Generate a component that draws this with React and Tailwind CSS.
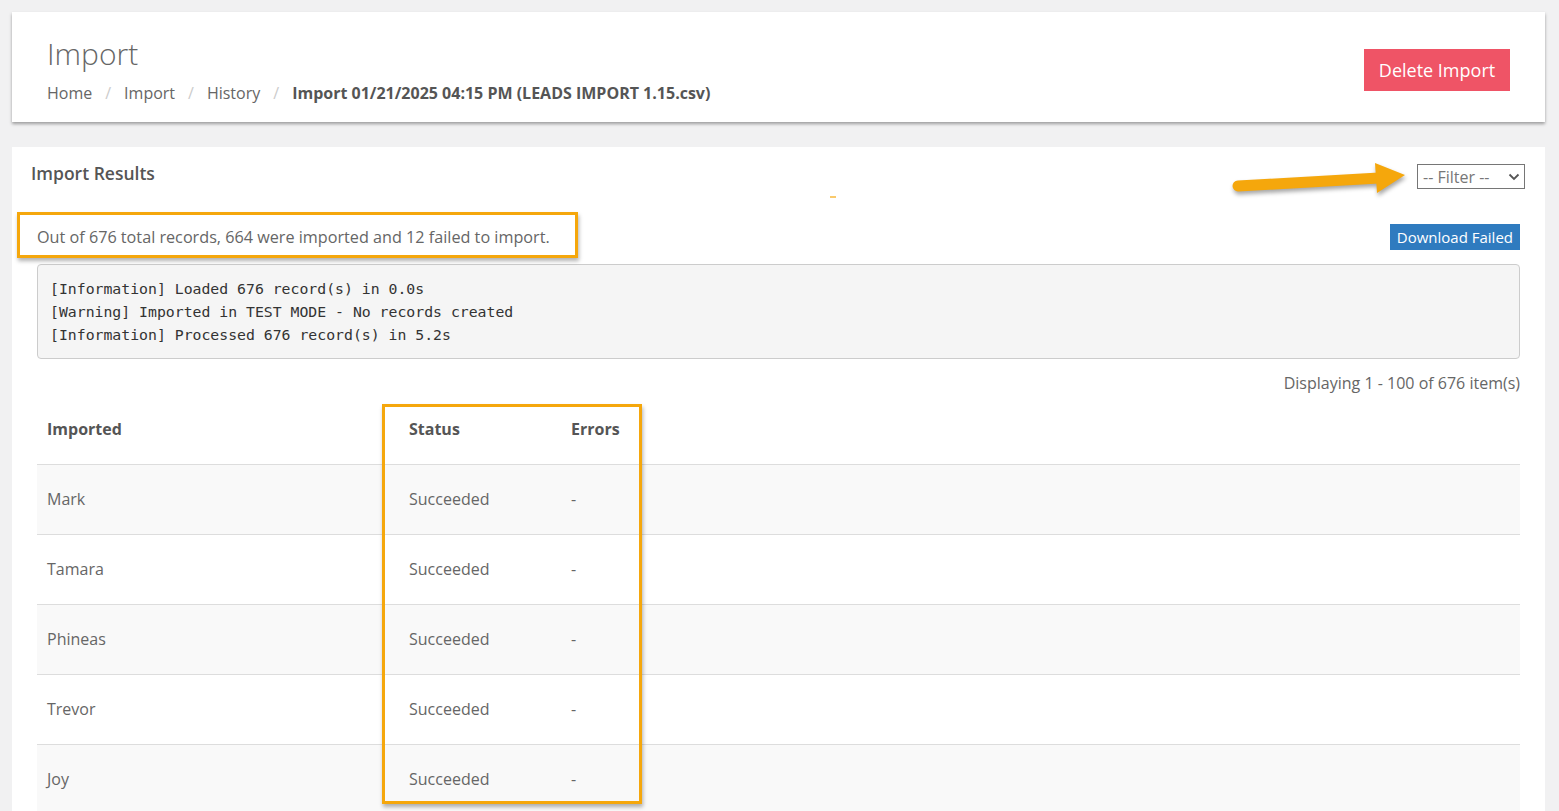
import React from "react";

const rows = ["Mark", "Tamara", "Phineas", "Trevor", "Joy"];

function Arrow() {
  return (
    <svg
      className="absolute left-[1205px] top-[10px]"
      width="200"
      height="50"
      viewBox="0 0 200 50"
      style={{ filter: "drop-shadow(1px 3px 2px rgba(0,0,0,0.35))" }}
    >
      <line x1="21" y1="29" x2="162" y2="21" stroke="#f5a70c" strokeWidth="11" strokeLinecap="round" />
      <polygon points="158,6 188,18 160,36" fill="#f5a70c" />
    </svg>
  );
}

export default function App() {
  return (
    <div
      className="min-h-screen bg-[#f1f1f2] pl-3 pr-[14px] pt-3 text-[#666666]"
      style={{ fontFamily: "'Open Sans', 'Liberation Sans', sans-serif" }}
    >
      {/* Header card */}
      <div className="flex h-[110px] items-start justify-between bg-white px-[35px] shadow-[0_2px_3px_rgba(0,0,0,0.35)]">
        <div className="pt-[24px]">
          <h1 className="text-[30px] font-light leading-[36px] text-[#666666]">Import</h1>
          <nav className="mt-[10px] flex items-center text-[16px] leading-[22px]">
            <span>Home</span>
            <span className="px-[13px] text-[#cccccc]">/</span>
            <span>Import</span>
            <span className="px-[13px] text-[#cccccc]">/</span>
            <span>History</span>
            <span className="px-[13px] text-[#cccccc]">/</span>
            <span className="font-bold text-[#555555]">Import 01/21/2025 04:15 PM (LEADS IMPORT 1.15.csv)</span>
          </nav>
        </div>
        <button className="mt-[37px] h-[42px] w-[146px] bg-[#ef5466] text-[18px] text-white">
          Delete Import
        </button>
      </div>

      {/* Results card */}
      <div className="relative mt-[25px] bg-white pb-[20px]">
        <Arrow />
        <div className="absolute left-[818px] top-[49px] h-[2px] w-[6px] bg-[#f5a70c] opacity-60" />
        <div className="absolute left-[5px] top-[65px] h-[46px] w-[561px] border-[3px] border-[#f5a70c] shadow-[1px_3px_4px_rgba(0,0,0,0.3)]" />
        <div className="absolute left-[370px] top-[257px] h-[400px] w-[260px] border-[3px] border-[#f5a70c] shadow-[1px_3px_4px_rgba(0,0,0,0.3)]" />

        <div className="flex items-start justify-between pl-[19px] pr-[20px] pt-[14px]">
          <h2 className="text-[17.5px] font-semibold leading-[24px] text-[#555555]">Import Results</h2>
          <div className="mt-[3px] flex h-[25px] w-[108px] items-center justify-between border border-[#767676] pl-[5px] pr-[4px] text-[16px] text-[#777777]">
            <span>-- Filter --</span>
            <svg width="12" height="8" viewBox="0 0 12 8">
              <path d="M1.5 1.5 L6 6 L10.5 1.5" fill="none" stroke="#555" strokeWidth="1.8" />
            </svg>
          </div>
        </div>

        <div className="px-[25px]">
          <div className="mt-[35px] flex items-end justify-between">
            <p className="pb-[1px] text-[16.2px] leading-[22px]">
              Out of 676 total records, 664 were imported and 12 failed to import.
            </p>
            <button className="mb-[-1px] h-[26px] bg-[#2f7bbf] px-[7px] text-[15px] leading-[26px] text-white">
              Download Failed
            </button>
          </div>

          <pre
            className="mt-[15px] rounded-[4px] border border-[#cccccc] bg-[#f5f5f5] px-[12px] py-[12px] text-[14.8px] leading-[23px] text-[#333333]"
            style={{ fontFamily: "'DejaVu Sans Mono', 'Liberation Mono', monospace" }}
          >
{`[Information] Loaded 676 record(s) in 0.0s
[Warning] Imported in TEST MODE - No records created
[Information] Processed 676 record(s) in 5.2s`}
          </pre>

          <div className="mt-[13px] text-right text-[16px] leading-[22px]">Displaying 1 - 100 of 676 item(s)</div>

          <table className="w-full border-collapse text-[16px]">
            <thead>
              <tr className="h-[70px] border-b border-[#dddddd] text-left">
                <th className="w-[362px] px-[10px] font-bold text-[#555555]">Imported</th>
                <th className="w-[162px] px-[10px] font-bold text-[#555555]">Status</th>
                <th className="px-[10px] font-bold text-[#555555]">Errors</th>
              </tr>
            </thead>
            <tbody>
              {rows.map((name, i) => (
                <tr key={name} className={`h-[70px] border-b border-[#dddddd] ${i % 2 === 0 ? "bg-[#f9f9f9]" : "bg-white"}`}>
                  <td className="px-[10px]">{name}</td>
                  <td className="px-[10px]">Succeeded</td>
                  <td className="px-[10px]">-</td>
                </tr>
              ))}
            </tbody>
          </table>
        </div>
      </div>
    </div>
  );
}
